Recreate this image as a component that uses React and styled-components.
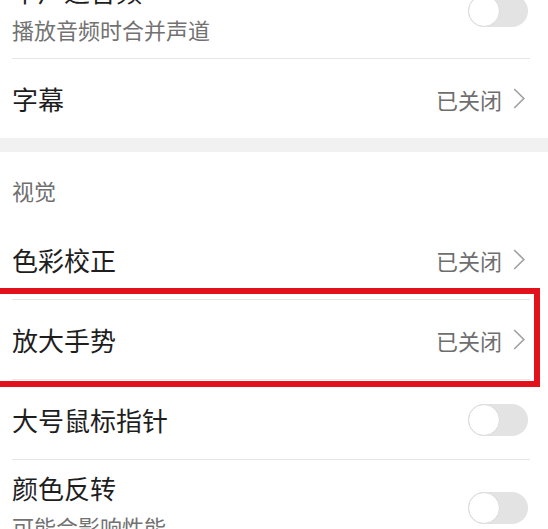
import React from 'react';
import styled, { createGlobalStyle } from 'styled-components';

const GlobalStyle = createGlobalStyle`
  html, body {
    margin: 0;
    padding: 0;
    background: #ffffff;
    overflow: hidden;
  }
  body {
    font-family: "Noto Sans CJK SC", "Noto Sans", sans-serif;
  }
`;

const Page = styled.div`
  width: 548px;
  height: 529px;
  overflow: hidden;
  background: #fff;
`;

const List = styled.div`
  display: flex;
  flex-direction: column;
  margin-top: -37px;
`;

const Row = styled.div`
  position: relative;
  display: flex;
  align-items: center;
  justify-content: space-between;
  height: ${({tall}) => tall ? '95px' : '79px'};
  padding: 0 ${({toggle}) => toggle ? '20px' : '23px'} 0 12px;
  box-sizing: border-box;

  ${({marked}) => marked && `
    &::after{
      content: '';
      position: absolute;
      top: -12px;
      bottom: -8px;
      left: -14px;
      right: 8px;
      border: 6px solid #e2111b;
      pointer-events: none;
      z-index: 2;
    }
  `}
`;

const Texts = styled.div`
  display: flex;
  flex-direction: column;
  margin-top: ${({tall}) => tall ? '-4px' : '0'};
`;

const Title = styled.div`
  font-size: 26px;
  line-height: 34px;
  color: #1e1e1e;
`;

const Sub = styled.div`
  font-size: 22px;
  line-height: 28px;
  color: #727272;
  margin-top: 7px;
`;

const Value = styled.div`
  display: flex;
  align-items: center;
  gap: 11px;
  font-size: 22px;
  color: #6e6e6e;

  svg{
    display: block;
  }
`;

const Divider = styled.div`
  height: 1px;
  margin: 0 18px 0 12px;
  background: #e6e6e6;
`;

const Band = styled.div`
  height: 14px;
  background: #f1f1f1;
`;

const Header = styled.div`
  height: 68px;
  padding: 25px 12px 0;
  box-sizing: border-box;
  font-size: 22px;
  line-height: 26px;
  color: #6f6f6f;
`;

const Track = styled.div`
  width: 60px;
  height: 32px;
  border-radius: 16px;
  background: #e3e3e3;
  position: relative;
  flex-shrink: 0;
  margin-top: ${({shift}) => shift || 0}px;

  &::before{
    content: '';
    position: absolute;
    left: 0;
    top: 0;
    width: 32px;
    height: 32px;
    box-sizing: border-box;
    border-radius: 50%;
    background: #fff;
    border: 1.5px solid #dadada;
  }
`;

const Chevron = () => (
    <svg width="12" height="21" viewBox="0 0 12 21">
        <polyline points="1.2,1 10.8,10.5 1.2,20" fill="none" stroke="#a2a2a2" strokeWidth="1.7" />
    </svg>
);

const NavRow = ({title, marked}) => (
    <Row marked={marked}>
        <Title>{title}</Title>
        <Value>已关闭<Chevron /></Value>
    </Row>
);

const SwitchRow = ({title, sub}) => (
    <Row tall={!!sub} toggle>
        <Texts tall={!!sub}>
            <Title>{title}</Title>
            {sub && <Sub>{sub}</Sub>}
        </Texts>
        <Track />
    </Row>
);

const App = () => {

    return(
        <Page>
            <GlobalStyle />
            <List>
                <SwitchRow title="单声道音频" sub="播放音频时合并声道" />
                <Divider />
                <NavRow title="字幕" />
                <Band />
                <Header>视觉</Header>
                <NavRow title="色彩校正" />
                <Divider />
                <NavRow title="放大手势" marked />
                <Divider />
                <SwitchRow title="大号鼠标指针" />
                <Divider />
                <SwitchRow title="颜色反转" sub="可能会影响性能" />
            </List>
        </Page>
    )
}

export default App
